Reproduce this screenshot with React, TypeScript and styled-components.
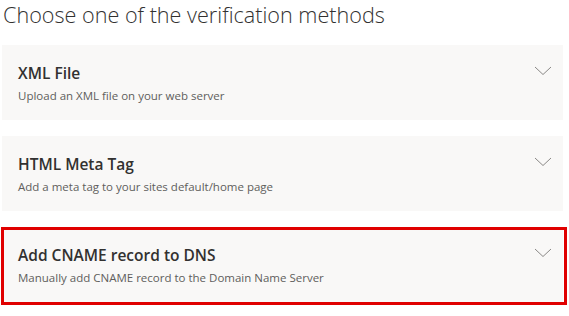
import styled, { createGlobalStyle } from "styled-components";

const GlobalStyle = createGlobalStyle`
	body {
		margin: 0;
		background: #ffffff;
		font-family: "Open Sans", "Noto Sans", sans-serif;
	}
`;

const methods = [
	{ title: "XML File", description: "Upload an XML file on your web server" },
	{ title: "HTML Meta Tag", description: "Add a meta tag to your sites default/home page" },
	{
		title: "Add CNAME record to DNS",
		description: "Manually add CNAME record to the Domain Name Server",
		highlighted: true,
	},
];

export default function App() {
	return (
		<>
			<GlobalStyle />
			<Wrapper>
				<Heading>Choose one of the verification methods</Heading>
				<List>
					{methods.map((m) => (
						<Card key={m.title} $highlighted={!!m.highlighted}>
							<Text>
								<Title>{m.title}</Title>
								<Description>{m.description}</Description>
							</Text>
							<Chevron viewBox="0 0 18 10" aria-hidden>
								<path d="M1 1 L9 8.5 L17 1" />
							</Chevron>
						</Card>
					))}
				</List>
			</Wrapper>
		</>
	);
}

const Wrapper = styled.div`
	width: 561px;
	padding: 0 0 0 2px;
	display: flex;
	flex-direction: column;
`;

const Heading = styled.h1`
	margin: 0;
	padding-left: 1px;
	font-size: 21.6px;
	font-weight: 300;
	line-height: 29px;
	color: #323130;
`;

const List = styled.div`
	margin-top: 16px;
	display: flex;
	flex-direction: column;
	gap: 16px;
`;

const Card = styled.div<{ $highlighted: boolean }>`
	position: relative;
	height: ${(p) => (p.$highlighted ? "78px" : "75px")};
	box-sizing: border-box;
	padding: 0 11px 0 16px;
	background: #f9f8f7;
	display: flex;
	align-items: flex-start;
	justify-content: space-between;

	&::after {
		content: "";
		display: ${(p) => (p.$highlighted ? "block" : "none")};
		position: absolute;
		top: 0;
		bottom: 0;
		left: -1px;
		right: -4px;
		border: 3px solid #e00000;
		pointer-events: none;
	}
`;

const Text = styled.div`
	display: flex;
	flex-direction: column;
	padding-top: 17px;
`;

const Title = styled.div`
	font-size: 15.5px;
	font-weight: 600;
	line-height: 22px;
	color: #323130;
`;

const Description = styled.div`
	margin-top: 4px;
	font-size: 11.5px;
	line-height: 16px;
	color: #605e5c;
`;

const Chevron = styled.svg`
	width: 18px;
	height: 10px;
	margin-top: 21px;
	fill: none;
	stroke: #8a8886;
	stroke-width: 1;
`;
